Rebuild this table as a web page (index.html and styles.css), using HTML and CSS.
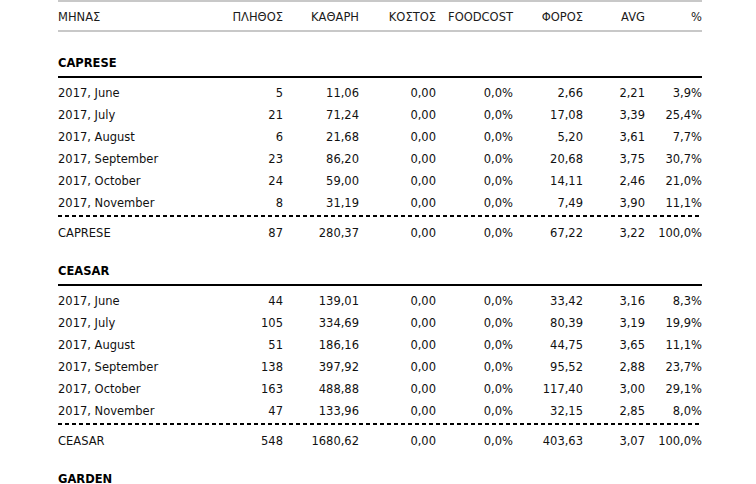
FILE: index.html
```html
<!DOCTYPE html>
<html lang="el">
<head>
<meta charset="utf-8">
<title>Report</title>
<link rel="stylesheet" href="styles.css">
</head>
<body>
<div class="page">
<table class="report">
  <colgroup>
    <col class="c1"><col class="c2"><col class="c3"><col class="c4"><col class="c5"><col class="c6"><col class="c7"><col class="c8">
  </colgroup>
  <thead>
    <tr class="head">
      <th class="l">ΜΗΝΑΣ</th><th>ΠΛΗΘΟΣ</th><th>ΚΑΘΑΡΗ</th><th>ΚΟΣΤΟΣ</th><th>FOODCOST</th><th>ΦΟΡΟΣ</th><th>AVG</th><th>%</th>
    </tr>
  </thead>
  <tbody class="group first">
    <tr class="title"><td colspan="8">CAPRESE</td></tr>
    <tr class="gap"><td colspan="8"></td></tr>
    <tr class="row"><td class="l">2017, June</td><td>5</td><td>11,06</td><td>0,00</td><td>0,0%</td><td>2,66</td><td>2,21</td><td>3,9%</td></tr>
    <tr class="row"><td class="l">2017, July</td><td>21</td><td>71,24</td><td>0,00</td><td>0,0%</td><td>17,08</td><td>3,39</td><td>25,4%</td></tr>
    <tr class="row"><td class="l">2017, August</td><td>6</td><td>21,68</td><td>0,00</td><td>0,0%</td><td>5,20</td><td>3,61</td><td>7,7%</td></tr>
    <tr class="row"><td class="l">2017, September</td><td>23</td><td>86,20</td><td>0,00</td><td>0,0%</td><td>20,68</td><td>3,75</td><td>30,7%</td></tr>
    <tr class="row"><td class="l">2017, October</td><td>24</td><td>59,00</td><td>0,00</td><td>0,0%</td><td>14,11</td><td>2,46</td><td>21,0%</td></tr>
    <tr class="row"><td class="l">2017, November</td><td>8</td><td>31,19</td><td>0,00</td><td>0,0%</td><td>7,49</td><td>3,90</td><td>11,1%</td></tr>
    <tr class="dots"><td colspan="8"><div class="dotline"></div></td></tr>
    <tr class="row total"><td class="l">CAPRESE</td><td>87</td><td>280,37</td><td>0,00</td><td>0,0%</td><td>67,22</td><td>3,22</td><td>100,0%</td></tr>
  </tbody>
  <tbody class="group">
    <tr class="title"><td colspan="8">CEASAR</td></tr>
    <tr class="gap"><td colspan="8"></td></tr>
    <tr class="row"><td class="l">2017, June</td><td>44</td><td>139,01</td><td>0,00</td><td>0,0%</td><td>33,42</td><td>3,16</td><td>8,3%</td></tr>
    <tr class="row"><td class="l">2017, July</td><td>105</td><td>334,69</td><td>0,00</td><td>0,0%</td><td>80,39</td><td>3,19</td><td>19,9%</td></tr>
    <tr class="row"><td class="l">2017, August</td><td>51</td><td>186,16</td><td>0,00</td><td>0,0%</td><td>44,75</td><td>3,65</td><td>11,1%</td></tr>
    <tr class="row"><td class="l">2017, September</td><td>138</td><td>397,92</td><td>0,00</td><td>0,0%</td><td>95,52</td><td>2,88</td><td>23,7%</td></tr>
    <tr class="row"><td class="l">2017, October</td><td>163</td><td>488,88</td><td>0,00</td><td>0,0%</td><td>117,40</td><td>3,00</td><td>29,1%</td></tr>
    <tr class="row"><td class="l">2017, November</td><td>47</td><td>133,96</td><td>0,00</td><td>0,0%</td><td>32,15</td><td>2,85</td><td>8,0%</td></tr>
    <tr class="dots"><td colspan="8"><div class="dotline"></div></td></tr>
    <tr class="row total"><td class="l">CEASAR</td><td>548</td><td>1680,62</td><td>0,00</td><td>0,0%</td><td>403,63</td><td>3,07</td><td>100,0%</td></tr>
  </tbody>
  <tbody class="group">
    <tr class="title"><td colspan="8">GARDEN</td></tr>
  </tbody>
</table>
</div>
</body>
</html>
```

FILE: styles.css
```css
html, body {
  margin: 0;
  padding: 0;
  background: #fff;
}
body {
  font-family: "DejaVu Sans", Verdana, sans-serif;
  font-size: 11.5px;
  color: #000;
}
.page {
  padding-left: 58px;
}
.report {
  width: 644px;
  border-collapse: collapse;
  table-layout: fixed;
}
.c1 { width: 160px; }
.c2 { width: 65px; }
.c3 { width: 76px; }
.c4 { width: 77px; }
.c5 { width: 77px; }
.c6 { width: 70px; }
.c7 { width: 62px; }
.c8 { width: 57px; }

.report th,
.report td {
  padding: 0;
  text-align: right;
  white-space: nowrap;
  font-weight: normal;
}
.report .l {
  text-align: left;
}
.head th {
  height: 26px;
  padding-top: 2px;
  line-height: 14px;
  border-top: 2px solid #c8c8c8;
  border-bottom: 2px solid #c8c8c8;
  color: #1a1a1a;
  vertical-align: middle;
}
.title td {
  text-align: left;
  font-weight: bold;
  line-height: 14px;
  padding: 21px 0 6px;
  border-bottom: 2px solid #000;
}
.first .title td {
  padding-top: 24px;
}
.gap td {
  height: 3px;
}
.row td {
  padding-top: 3px;
  line-height: 19px;
  color: #111;
}
.dots td {
  padding: 2px 0 4px;
}
.dotline {
  height: 2px;
  background-image: repeating-linear-gradient(to right, #000 0, #000 4px, transparent 4px, transparent 7px);
}
```
